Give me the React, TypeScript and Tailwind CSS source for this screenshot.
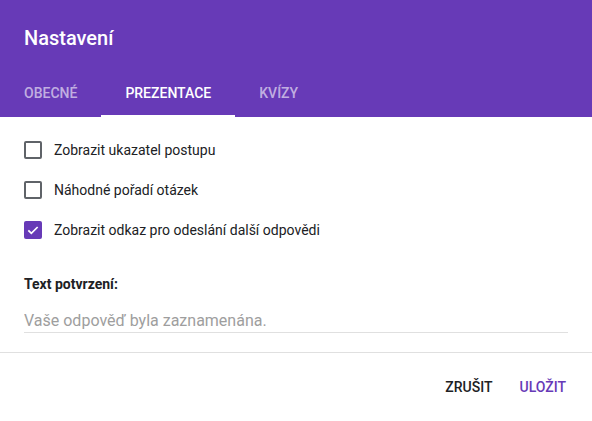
import { useState } from "react";

const options = [
  { label: "Zobrazit ukazatel postupu", checked: false },
  { label: "Náhodné pořadí otázek", checked: false },
  { label: "Zobrazit odkaz pro odeslání další odpovědi", checked: true },
];

const tabs = ["Obecné", "Prezentace", "Kvízy"];

function Checkbox({ checked, onClick }: { checked: boolean; onClick: () => void }) {
  return (
    <button
      onClick={onClick}
      className={
        checked
          ? "w-[18px] h-[18px] rounded-[2px] bg-[#673ab7] flex items-center justify-center shrink-0"
          : "w-[18px] h-[18px] rounded-[2px] border-2 border-[#5f6368] shrink-0"
      }
    >
      {checked && (
        <svg viewBox="0 0 24 24" className="w-[16px] h-[16px]" fill="none">
          <path d="M5 12.5l4.5 4.5L19 7.5" stroke="white" strokeWidth="2.6" />
        </svg>
      )}
    </button>
  );
}

export default function App() {
  const [checks, setChecks] = useState(options.map((o) => o.checked));
  const [active, setActive] = useState(1);

  return (
    <div className="min-h-screen bg-white font-['Roboto',sans-serif]">
      {/* Header */}
      <div className="bg-[#673ab7] pt-6">
        <h1 className="px-6 text-[20px] leading-7 font-medium text-white">Nastavení</h1>
        <div className="flex mt-[17px]">
          {tabs.map((t, i) => (
            <button
              key={t}
              onClick={() => setActive(i)}
              className={
                i === active
                  ? "relative h-12 px-6 text-[14px] font-medium uppercase text-white"
                  : "relative h-12 px-6 text-[14px] font-medium uppercase text-white/60"
              }
            >
              {t}
              {i === active && <span className="absolute left-0 right-0 bottom-0 h-[2px] bg-white" />}
            </button>
          ))}
        </div>
      </div>

      {/* Body */}
      <div className="px-6 pt-[13px]">
        {options.map((o, i) => (
          <div key={o.label} className="h-10 flex items-center gap-3">
            <Checkbox
              checked={checks[i]}
              onClick={() => setChecks(checks.map((c, j) => (j === i ? !c : c)))}
            />
            <span className="text-[14px] text-[#202124]">{o.label}</span>
          </div>
        ))}

        <div className="mt-6 text-[14px] leading-5 font-bold text-[#202124]">Text potvrzení:</div>
        <input
          className="mt-[14px] w-full h-[25px] border-b border-[#e0e0e0] text-[16px] text-[#202124] placeholder:text-[#9e9e9e] outline-none"
          placeholder="Vaše odpověď byla zaznamenána."
        />
      </div>

      {/* Footer */}
      <div className="mt-[19px] border-t border-[#e0e0e0] pt-4 pr-[18px] flex justify-end gap-[11px]">
        <button className="h-9 px-2 text-[14px] font-medium uppercase text-[#202124]">Zrušit</button>
        <button className="h-9 px-2 text-[14px] font-medium uppercase text-[#673ab7]">Uložit</button>
      </div>
    </div>
  );
}
